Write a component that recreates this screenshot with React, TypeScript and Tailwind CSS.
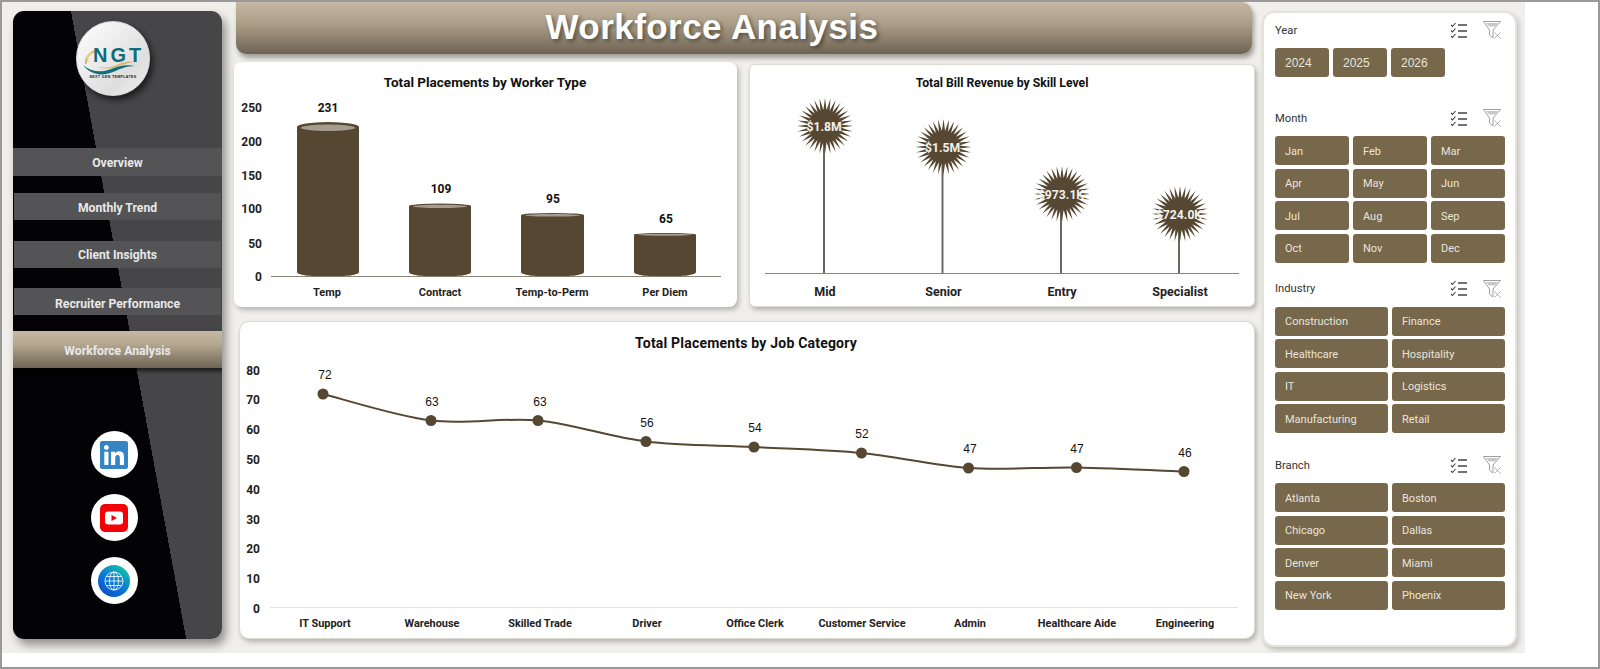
import { FaLinkedin } from "react-icons/fa";

const BROWN = "#554732";

const workerBars = [
  { label: "Temp", value: "231", x: 297, w: 62, top: 127, rx: 5, valueY: 107, cx: 327 },
  { label: "Contract", value: "109", x: 409, w: 62, top: 206, rx: 2.5, valueY: 188.5, cx: 440 },
  { label: "Temp-to-Perm", value: "95", x: 521, w: 63, top: 215, rx: 2, valueY: 198.5, cx: 552 },
  { label: "Per Diem", value: "65", x: 634, w: 62, top: 234.5, rx: 1.5, valueY: 218.5, cx: 665 },
];

const skillStars = [
  { label: "Mid", value: "$1.8M", cx: 825, cy: 126 },
  { label: "Senior", value: "$1.5M", cx: 943.5, cy: 147 },
  { label: "Entry", value: "$973.1K", cx: 1062, cy: 194 },
  { label: "Specialist", value: "$724.0K", cx: 1180, cy: 214 },
];

const jobPoints = [
  { label: "IT Support", value: 72, x: 323, y: 394, lx: 325 },
  { label: "Warehouse", value: 63, x: 431, y: 420.5, lx: 432 },
  { label: "Skilled Trade", value: 63, x: 538, y: 420.5, lx: 540 },
  { label: "Driver", value: 56, x: 646, y: 441.5, lx: 647 },
  { label: "Office Clerk", value: 54, x: 754, y: 447, lx: 755 },
  { label: "Customer Service", value: 52, x: 861.5, y: 453, lx: 862 },
  { label: "Admin", value: 47, x: 968.5, y: 468, lx: 970 },
  { label: "Healthcare Aide", value: 47, x: 1076.5, y: 467.5, lx: 1077 },
  { label: "Engineering", value: 46, x: 1184, y: 471.5, lx: 1185 },
];

const slicers = [
  { title: "Year", cols: "w-[170px] grid-cols-3", items: ["2024", "2025", "2026"], gap: "mt-0", arial: true },
  {
    title: "Month",
    cols: "w-[230px] grid-cols-3",
    items: ["Jan", "Feb", "Mar", "Apr", "May", "Jun", "Jul", "Aug", "Sep", "Oct", "Nov", "Dec"],
    gap: "mt-[32px]",
  },
  {
    title: "Industry",
    cols: "w-[230px] grid-cols-2",
    items: ["Construction", "Finance", "Healthcare", "Hospitality", "IT", "Logistics", "Manufacturing", "Retail"],
    gap: "mt-[17px]",
  },
  {
    title: "Branch",
    cols: "w-[230px] grid-cols-2",
    items: ["Atlanta", "Boston", "Chicago", "Dallas", "Denver", "Miami", "New York", "Phoenix"],
    gap: "mt-[23px]",
  },
];

// spiky burst used as the marker on the revenue chart
function starPoints(cx: number, cy: number) {
  const spikes = 32;
  const pts: string[] = [];
  for (let i = 0; i < spikes * 2; i++) {
    const r = i % 2 === 0 ? 28 : 16;
    const a = (i * Math.PI) / spikes;
    pts.push(`${(cx + r * Math.cos(a)).toFixed(1)},${(cy + r * Math.sin(a)).toFixed(1)}`);
  }
  return pts.join(" ");
}

// catmull-rom through the job category points
function smoothPath(pts: { x: number; y: number }[]) {
  let d = `M${pts[0].x} ${pts[0].y}`;
  for (let i = 0; i < pts.length - 1; i++) {
    const p0 = pts[Math.max(i - 1, 0)];
    const p1 = pts[i];
    const p2 = pts[i + 1];
    const p3 = pts[Math.min(i + 2, pts.length - 1)];
    const k = 0.16;
    d += ` C${p1.x + (p2.x - p0.x) * k} ${p1.y + (p2.y - p0.y) * k} ${p2.x - (p3.x - p1.x) * k} ${p2.y - (p3.y - p1.y) * k} ${p2.x} ${p2.y}`;
  }
  return d;
}

function Logo() {
  return (
    <div className="mt-[10px] mr-[9px] h-[75px] w-[74px] shrink-0 rounded-full border border-[#d8d8d8] bg-[linear-gradient(135deg,#ffffff,#dedede_70%,#f0f0f0)] shadow-[3px_4px_6px_rgba(0,0,0,0.6)]">
      <svg viewBox="77 22 72 73" className="h-full w-full">
        <path d="M99 50c-8 1-14 7-13 14" fill="none" stroke="#d9b56a" strokeWidth="2" />
        <path d="M92 52c-4 2-5 6-4 10" fill="none" stroke="#e6cf9a" strokeWidth="1.5" />
        <path d="M83 65c8 7 18 8 28 4 8-3 15-5 24-3-9 0-15 3-22 6-12 5-23 2-30-7z" fill="#0f6f7a" />
        <path d="M97 67c8 2 15 0 22-3 5-2 9-3 14-2-6 1-11 3-17 5-7 2-13 2-19 0z" fill="#d9b56a" />
        <text x="93" y="62" fontSize="20" fontWeight="700" fill="#0e6c78" letterSpacing="3" className="font-['Liberation_Sans',sans-serif]">
          NGT
        </text>
        <text x="113" y="77.5" textAnchor="middle" fontSize="3.6" fontWeight="700" fill="#222" letterSpacing="0.35" className="font-['Liberation_Sans',sans-serif]">
          NEXT GEN TEMPLATES
        </text>
      </svg>
    </div>
  );
}

function NavItem({ label, className }: { label: string; className: string }) {
  return (
    <div className={`flex shrink-0 items-center justify-center text-[12.2px] font-bold text-[#e8e8e8] ${className}`}>
      {label}
    </div>
  );
}

function SocialLinks() {
  return (
    <div className="mt-[63px] mr-[7px] flex flex-col gap-[16px]">
      <div className="flex h-[47px] w-[47px] items-center justify-center rounded-full bg-white">
        <FaLinkedin className="h-[32px] w-[32px] text-[#3585c5]" />
      </div>
      <div className="flex h-[47px] w-[47px] items-center justify-center rounded-full bg-white">
        <svg viewBox="0 0 28 28" className="h-[28px] w-[28px]">
          <rect width="28" height="28" rx="5" fill="#f40009" />
          <rect x="5" y="7.5" width="18" height="13" rx="3" fill="#fff" />
          <path d="M11.5 11l5.5 3-5.5 3z" fill="#f40009" />
        </svg>
      </div>
      <div className="flex h-[47px] w-[47px] items-center justify-center rounded-full bg-white">
        <div className="flex h-[32px] w-[32px] items-center justify-center rounded-full bg-[linear-gradient(215deg,#12d6a0,#0b74d6_55%,#0a49c4)]">
          <svg viewBox="0 0 20 20" className="h-[20px] w-[20px]" fill="none" stroke="#ffffff" strokeWidth="0.8">
            <circle cx="10" cy="10" r="9" />
            <ellipse cx="10" cy="10" rx="4.5" ry="9" />
            <path d="M10 1v18M1 10h18M2.2 5.5h15.6M2.2 14.5h15.6" />
          </svg>
        </div>
      </div>
    </div>
  );
}

function Sidebar() {
  return (
    <aside className="mt-[9px] ml-[11px] flex h-[628px] w-[209px] shrink-0 flex-col items-center overflow-hidden rounded-[11px] bg-[linear-gradient(79.6deg,#030305_53.4%,#464547_53.4%)] shadow-[4px_6px_10px_rgba(0,0,0,0.4)] font-['Roboto',sans-serif]">
      <Logo />
      <NavItem label="Overview" className="mt-[52px] h-[28px] w-full bg-[#545456] pt-[2px]" />
      <NavItem label="Monthly Trend" className="mt-[17px] h-[27px] w-[207px] bg-[#545456] pt-[3px]" />
      <NavItem label="Client Insights" className="mt-[21px] h-[27px] w-[207px] bg-[#545456] pt-[2px]" />
      <NavItem label="Recruiter Performance" className="mt-[20px] h-[27px] w-[207px] bg-[#545456] pt-[5px]" />
      <NavItem
        label="Workforce Analysis"
        className="mt-[16px] h-[37px] w-full bg-[linear-gradient(180deg,#c6b8a2,#b5a890_35%,#6f6555)] pt-[3px] shadow-[2px_3px_4px_rgba(0,0,0,0.6)]"
      />
      <SocialLinks />
    </aside>
  );
}

function WorkerChart() {
  return (
    <svg viewBox="234 62 503 245" className="h-full w-full font-['Roboto',sans-serif]">
      <text x="485" y="87" textAnchor="middle" fontSize="13.5" fontWeight="700" fill="#111">
        Total Placements by Worker Type
      </text>
      {["250", "200", "150", "100", "50", "0"].map((t, i) => (
        <text key={t} x="262" y={[112, 146, 180, 213, 248, 281][i]} textAnchor="end" fontSize="12" fontWeight="700" fill="#222">
          {t}
        </text>
      ))}
      {workerBars.map((b) => {
        const cx = b.x + b.w / 2;
        return (
          <g key={b.label}>
            <path
              d={`M${b.x} ${b.top}V272c0 3 ${b.w * 0.2} 4.5 ${b.w / 2} 4.5s${b.w / 2} -1.5 ${b.w / 2} -4.5V${b.top}z`}
              fill={BROWN}
            />
            <ellipse cx={cx} cy={b.top} rx={b.w / 2} ry={b.rx} fill={BROWN} />
            <ellipse cx={cx} cy={b.top + b.rx * 0.15} rx={b.w / 2 - 4} ry={b.rx * 0.65} fill="#a59c8f" />
            <text x={b.cx + 1} y={b.valueY + 4.5} textAnchor="middle" fontSize="12" fontWeight="700" fill="#111">
              {b.value}
            </text>
            <text x={b.cx} y="295.5" textAnchor="middle" fontSize="11" fontWeight="700" fill="#222">
              {b.label}
            </text>
          </g>
        );
      })}
      <line x1="271" x2="721" y1="276.5" y2="276.5" stroke="#8a8478" strokeWidth="1" />
    </svg>
  );
}

function RevenueChart() {
  return (
    <svg viewBox="750 65 504 241" className="h-full w-full font-['Roboto',sans-serif]">
      <text x="1002" y="87" textAnchor="middle" fontSize="12.2" fontWeight="700" fill="#111">
        Total Bill Revenue by Skill Level
      </text>
      {skillStars.map((s) => (
        <g key={s.label}>
          <line x1={s.cx - 1} x2={s.cx - 1} y1={s.cy} y2="273" stroke="#6e665a" strokeWidth="2" />
          <polygon points={starPoints(s.cx, s.cy)} fill={BROWN} />
          <text x={s.cx - 1} y={s.cy + 5} textAnchor="middle" fontSize="12.2" fontWeight="700" fill="#f4f1ea">
            {s.value}
          </text>
          <text x={s.cx} y="295.5" textAnchor="middle" fontSize="12.5" fontWeight="700" fill="#222">
            {s.label}
          </text>
        </g>
      ))}
      <line x1="765" x2="1239" y1="273.5" y2="273.5" stroke="#8a8478" strokeWidth="1" />
    </svg>
  );
}

function JobChart() {
  return (
    <svg viewBox="240 322 1014 316" className="h-full w-full font-['Roboto',sans-serif]">
      <text x="746" y="348" textAnchor="middle" fontSize="14" fontWeight="700" letterSpacing="0.2" fill="#111">
        Total Placements by Job Category
      </text>
      {[80, 70, 60, 50, 40, 30, 20, 10, 0].map((t, i) => (
        <text key={t} x="260" y={374.5 + i * 29.8} textAnchor="end" fontSize="12" fontWeight="700" fill="#222">
          {t}
        </text>
      ))}
      <line x1="270" x2="1238" y1="607.5" y2="607.5" stroke="#e2e2e2" strokeWidth="1" />
      <path d={smoothPath(jobPoints)} fill="none" stroke={BROWN} strokeWidth="2" />
      {jobPoints.map((p) => (
        <g key={p.label}>
          <circle cx={p.x} cy={p.y} r="5.5" fill={BROWN} />
          <text x={p.lx} y={p.y - 15} textAnchor="middle" fontSize="12" fill="#111" className="font-['Liberation_Sans',sans-serif]">
            {p.value}
          </text>
          <text x={p.lx} y="627" textAnchor="middle" fontSize="10.9" fontWeight="700" fill="#222">
            {p.label}
          </text>
        </g>
      ))}
    </svg>
  );
}

function SlicerIcons() {
  return (
    <div className="flex items-center gap-[15px]">
      <svg viewBox="0 0 18 17" className="h-[17px] w-[18px]" fill="none" stroke="#444" strokeWidth="1.1">
        <path d="M1 3l1.5 1.5L5.5 1M1 8.5L2.5 10l3-3.5M1 14l1.5 1.5 3-3.5" />
        <path d="M8 3h9M8 9h9M8 15h9" strokeWidth="1.3" />
      </svg>
      <svg viewBox="0 0 19 18" className="h-[18px] w-[19px]" fill="none">
        <path d="M.5.5h17L10 9v8l-3.5-3V9z" stroke="#a0a0a0" />
        <path d="M3 2h12l-3 3.5H6z" fill="#c8c8c8" />
        <path d="M11.5 11.5l6 6M17.5 11.5l-6 6" stroke="#b0b0b0" />
      </svg>
    </div>
  );
}

function Slicer({ title, cols, items, gap, arial }: { title: string; cols: string; items: string[]; gap: string; arial?: boolean }) {
  return (
    <section className={gap}>
      <div className="flex h-[18px] w-[227px] items-center justify-between">
        <span className="pt-[2px] text-[11.2px] text-[#333]">{title}</span>
        <SlicerIcons />
      </div>
      <div className={`mt-[9px] grid gap-x-[4px] gap-y-[3.5px] ${cols}`}>
        {items.map((item) => (
          <div
            key={item}
            className={`flex h-[29px] items-center rounded-[3px] bg-[#77674b] pl-[10px] text-[#e9e5dc] ${arial ? "text-[12px] font-['Liberation_Sans',sans-serif]" : "pt-[3px] text-[11px]"}`}
          >
            {item}
          </div>
        ))}
      </div>
    </section>
  );
}

export default function App() {
  return (
    <div className="h-[669px] w-[1600px] overflow-hidden border-2 border-[#9a9a9a] bg-white">
      <div className="flex h-[651px] w-[1523px] items-start overflow-hidden bg-[#f0efeb]">
        <Sidebar />

        <main className="ml-[12px] flex w-[1021px] shrink-0 flex-col">
          <header className="ml-[2px] flex h-[52px] w-[1016px] items-center justify-center rounded-tr-[10px] rounded-b-[10px] bg-[linear-gradient(180deg,#c6b8a2,#a89b85_45%,#6e6453)] pr-[64px] pb-[2px] shadow-[2px_4px_5px_rgba(0,0,0,0.35)]">
            <h1 className="text-[35px] font-bold tracking-[0.45px] text-white [text-shadow:2px_2px_4px_rgba(0,0,0,0.45)] font-['Liberation_Sans',sans-serif]">
              Workforce Analysis
            </h1>
          </header>

          <div className="mt-[8px] flex items-end">
            <div className="h-[245px] w-[503px] rounded-[8px] bg-white shadow-[2px_3px_5px_rgba(0,0,0,0.25)]">
              <WorkerChart />
            </div>
            <div className="ml-[12px] h-[243px] w-[506px] rounded-[6px] border border-[#dcdad2] bg-white shadow-[2px_3px_5px_rgba(0,0,0,0.25)]">
              <RevenueChart />
            </div>
          </div>

          <div className="mt-[14px] ml-[5px] h-[318px] w-[1016px] rounded-[10px] border border-[#dcdad2] bg-white shadow-[2px_3px_5px_rgba(0,0,0,0.25)]">
            <JobChart />
          </div>
        </main>

        <aside className="mt-[9px] ml-[7px] h-[636px] w-[255px] shrink-0 rounded-[12px] border-2 border-[#e4e2da] bg-white pt-[8px] pl-[11px] shadow-[2px_3px_5px_rgba(0,0,0,0.2)] font-['Roboto',sans-serif]">
          {slicers.map((s) => (
            <Slicer key={s.title} {...s} />
          ))}
        </aside>
      </div>
    </div>
  );
}
